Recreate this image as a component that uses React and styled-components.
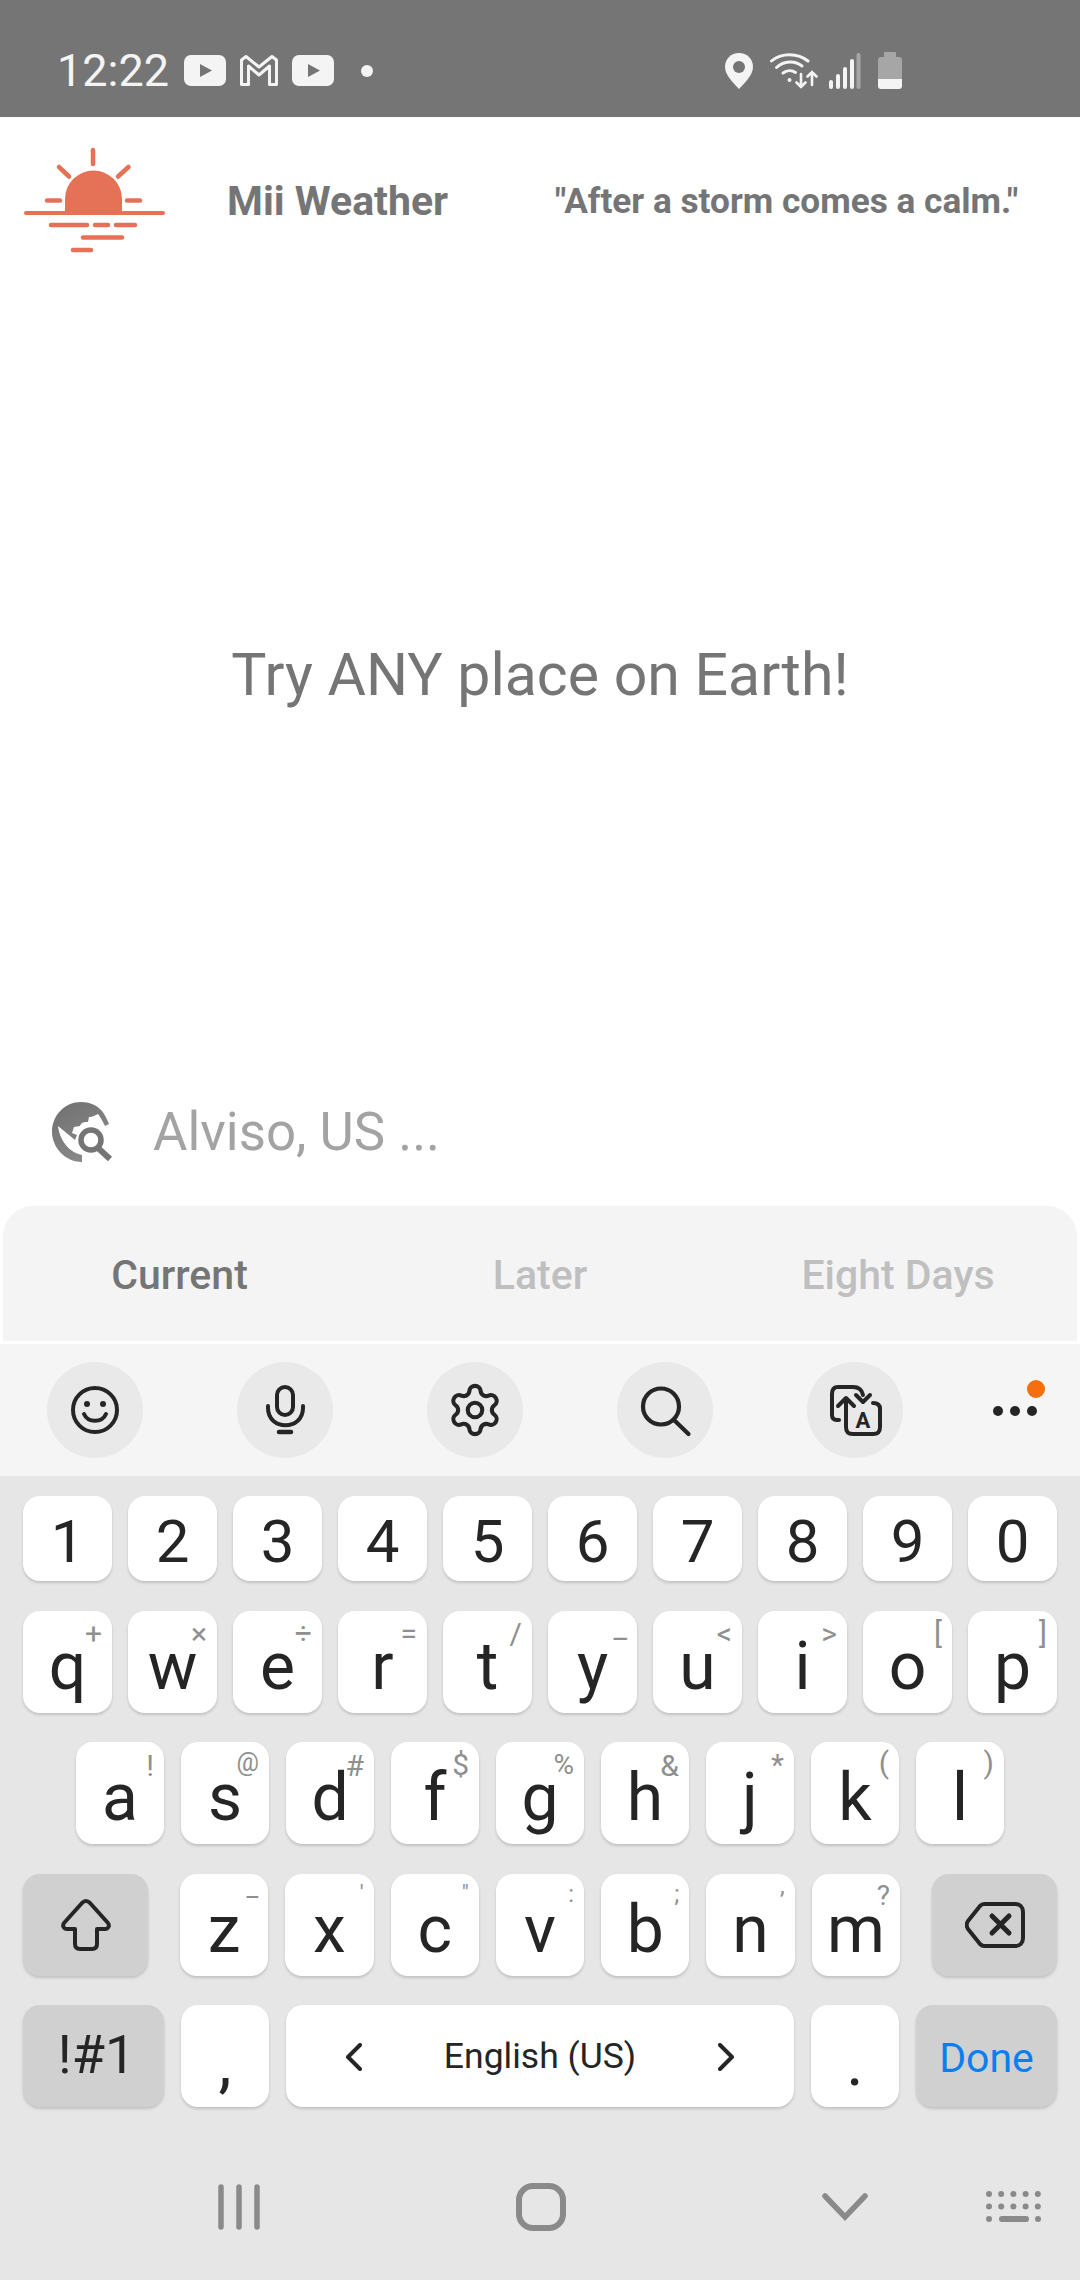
import React from "react";
import styled, { createGlobalStyle } from "styled-components";
import { Settings } from "lucide-react";

const Global = createGlobalStyle`
  html, body { margin: 0; padding: 0; background: #fff; }
  * { box-sizing: border-box; }
`;

const Page = styled.div`
  width: 1080px;
  height: 2280px;
  display: flex;
  flex-direction: column;
  overflow: hidden;
  background: #fff;
  font-family: Roboto, "Liberation Sans", sans-serif;
`;

const StatusBar = styled.div`
  height: 117px;
  flex: none;
  background: #757575;
  display: flex;
  align-items: center;
  padding: 24px 0 0 57px;
  color: #f4f4f4;
`;
const Time = styled.span`
  font-size: 45px;
  font-weight: 400;
  line-height: 1;
  width: 127px;
`;
const StatusIcon = styled.svg`
  flex: none;
  margin-left: ${(p) => p.$ml || 0}px;
`;

const Header = styled.div`
  height: 140px;
  flex: none;
  display: flex;
  align-items: flex-start;
  padding: 30px 0 0 22px;
  color: #757575;
  font-weight: 700;
`;
const Logo = styled.svg`
  flex: none;
`;
const HeaderText = styled.div`
  flex: 1;
  display: flex;
  align-items: center;
  height: 108px;
`;
const AppName = styled.div`
  font-size: 41px;
  margin-left: 59px;
  width: 328px;
  white-space: nowrap;
`;
const Quote = styled.div`
  font-size: 35.2px;
  white-space: nowrap;
`;

const Main = styled.div`
  flex: 1;
  display: flex;
  align-items: center;
  justify-content: center;
  padding-top: 6px;
  font-size: 59px;
  color: #757575;
`;

const SearchRow = styled.div`
  height: 120px;
  flex: none;
  display: flex;
  align-items: flex-start;
  padding: 16px 0 0 52px;
`;
const Placeholder = styled.div`
  margin-left: 39px;
  font-size: 52.8px;
  font-weight: 400;
  line-height: 60px;
  color: #a3a3a3;
`;

const Tabs = styled.div`
  height: 135px;
  flex: none;
  margin: 0 3px;
  background: #f4f4f4;
  border-radius: 30px 30px 0 0;
  display: grid;
  grid-template-columns: repeat(3, 1fr);
  align-items: start;
  padding-top: 46px;
`;
const Tab = styled.div`
  text-align: center;
  font-size: 41px;
  line-height: 46px;
  font-weight: 500;
  padding-right: ${(p) => (p.$active ? "5px" : "0")};
  color: ${(p) => (p.$active ? "#757575" : "#bfbfbf")};
`;

const Toolbar = styled.div`
  margin-top: 3px;
  height: 132px;
  flex: none;
  background: #f5f5f5;
  display: flex;
  align-items: center;
  gap: 94px;
  padding-left: 47px;
`;
const ToolButton = styled.div`
  width: 96px;
  height: 96px;
  flex: none;
  border-radius: 50%;
  background: #e9e9e9;
  display: flex;
  align-items: center;
  justify-content: center;
  color: #252525;
`;
const MoreButton = styled.div`
  position: relative;
  width: 44px;
  flex: none;
  display: flex;
  justify-content: space-between;
  margin-left: -4px;
  margin-top: 2px;
`;
const Dot = styled.span`
  width: 10px;
  height: 10px;
  border-radius: 50%;
  background: #252525;
`;
const Badge = styled.span`
  position: absolute;
  right: -8px;
  top: -26px;
  width: 18px;
  height: 18px;
  border-radius: 50%;
  background: #f56f0f;
`;

const Keyboard = styled.div`
  flex: none;
  height: 804px;
  background: #e6e6e6;
  padding: 20px 23px 0;
  display: flex;
  flex-direction: column;
  gap: 29.5px;
`;
const Row = styled.div`
  display: flex;
  gap: ${(p) => p.$gap ?? 16}px;
  padding: 0 ${(p) => p.$inset || 0}px;
`;
const Group = styled.div`
  display: flex;
  gap: 17px;
  margin: 0 32px;
  flex: 1;
`;
const Key = styled.div`
  position: relative;
  flex: ${(p) => (p.$w ? `0 0 ${p.$w}px` : "1 1 0")};
  height: ${(p) => p.$h || 102}px;
  border-radius: 17px;
  background: ${(p) => (p.$fn ? "#d0d0d0" : "#ffffff")};
  box-shadow: 0 2px 3px rgba(0, 0, 0, 0.16);
  color: #252525;
  display: flex;
  justify-content: center;
  align-items: flex-end;
  padding-bottom: ${(p) => p.$pb ?? 13}px;
  padding-left: ${(p) => p.$pl || 0}px;
  font-size: ${(p) => p.$fs || 66}px;
  line-height: 1;
`;
const Hint = styled.span`
  position: absolute;
  right: 10px;
  top: ${(p) => p.$top ?? 7}px;
  font-size: ${(p) => p.$fs || 30}px;
  line-height: 1;
  color: #8f8f8f;
`;
const SpaceKey = styled(Key)`
  justify-content: space-between;
  align-items: center;
  padding: 2px 60px 0;
  font-size: 35.5px;
`;
const FnText = styled.span`
  color: ${(p) => p.$color || "#252525"};
`;

const NavBar = styled.div`
  display: flex;
  align-items: center;
  padding-left: 195px;
  margin-top: 46.5px;
  color: #8a8a8a;
`;
const NavIcon = styled.svg`
  flex: none;
  margin-left: ${(p) => p.$ml || 0}px;
`;

const digits = "1234567890".split("");
const row2 = [
  ["q", "+", 8], ["w", "×", 8], ["e", "÷", 8], ["r", "=", 8], ["t", "/", 8],
  ["y", "_", 2], ["u", "<", 8], ["i", ">", 8], ["o", "[", 7], ["p", "]", 7],
];
const row3 = [
  ["a", "!", 9], ["s", "@", 8, 25], ["d", "#", 9], ["f", "$", 8], ["g", "%", 9, 28],
  ["h", "&", 9], ["j", "*", 8], ["k", "(", 6], ["l", ")", 6],
];
const row4 = [
  ["z", "_", 0, 26], ["x", "'", 8, 22], ["c", '"', 8, 22], ["v", ":", 8, 24],
  ["b", ";", 8, 24], ["n", ",", 0, 24], ["m", "?", 8, 28],
];

const Youtube = ({ ml }) => (
  <StatusIcon $ml={ml} width="42" height="31" viewBox="0 0 42 31">
    <rect x="0" y="0" width="42" height="31" rx="7" fill="#f4f4f4" />
    <path d="M16 9 L28 15.5 L16 22 Z" fill="#757575" />
  </StatusIcon>
);

const StatusBarIcons = () => (
  <>
    <Youtube />
    <StatusIcon $ml={14} width="38" height="31" viewBox="0 0 38 31" fill="none">
      <path
        d="M1.5 29.5 V5 L6 1.5 L19 12 L32 1.5 L36.5 5 V29.5 H29.5 V11 L19 20 L8.500 11 V29.5 Z"
        stroke="#f4f4f4"
        strokeWidth="3"
        strokeLinejoin="round"
      />
    </StatusIcon>
    <Youtube ml={14} />
    <StatusIcon $ml={27} width="12" height="12" viewBox="0 0 12 12">
      <circle cx="6" cy="6" r="6" fill="#f4f4f4" />
    </StatusIcon>
    <StatusIcon $ml={352} width="28" height="36" viewBox="0 0 28 36">
      <path
        d="M14 0 C6 0 0 6 0 14 C0 21 7 29 14 36 C21 29 28 21 28 14 C28 6 22 0 14 0 Z"
        fill="#f4f4f4"
      />
      <circle cx="14" cy="14" r="6" fill="#757575" />
    </StatusIcon>
    <StatusIcon $ml={17} width="48" height="38" viewBox="0 0 48 38" fill="none" stroke="#f4f4f4" strokeWidth="3" strokeLinecap="round">
      <path d="M1.500 9 C11 0.500 28 0.500 38 9" />
      <path d="M6.500 15.500 C14 8.500 25 8.500 32 14" />
      <path d="M13 21 C17 18 22 18 25.500 20.500" />
      <circle cx="19.500" cy="28" r="2" fill="#f4f4f4" stroke="none" />
      <path d="M31 22 V35 M26.500 30.500 L31 35 L35.500 30.500" strokeWidth="2.600" />
      <path d="M42 33 V20 M37.500 24.500 L42 20 L46.500 24.500" strokeWidth="2.600" />
    </StatusIcon>
    <StatusIcon $ml={11} width="32" height="36" viewBox="0 0 32 36" strokeLinecap="round" strokeWidth="4">
      <path d="M2 34 V29 M9 34 V23 M16 34 V16 M23 34 V8" stroke="#f4f4f4" />
      <path d="M29.500 34 V2" stroke="#a6a6a6" />
    </StatusIcon>
    <StatusIcon $ml={17} width="24" height="37" viewBox="0 0 24 37">
      <path d="M7 0 H17 Q18 0 18 1 V5 H21 Q24 5 24 8 V27 H0 V8 Q0 5 3 5 H6 V1 Q6 0 7 0 Z" fill="#a6a6a6" />
      <path d="M0 27 H24 V34 Q24 37 21 37 H3 Q0 37 0 34 Z" fill="#f4f4f4" />
    </StatusIcon>
  </>
);

const SunLogo = () => (
  <Logo width="146" height="108" viewBox="22 146 146 108" fill="none" stroke="#e57157" strokeWidth="4.500" strokeLinecap="round">
    <path d="M65 211 V198 A28.500 28.500 0 0 1 122 198 V211 Z" fill="#e57157" stroke="none" />
    <path d="M93 149 V163" />
    <path d="M59 166 L69 175.500" />
    <path d="M128.500 166 L118 175.500" />
    <path d="M47 199.500 H60" />
    <path d="M127 199.500 H140" />
    <path d="M26 212 H163" strokeWidth="4" />
    <path d="M51 224 H87 M95 224 H108 M116 224 H135" />
    <path d="M83 236.500 H122" />
    <path d="M73 249 H91" />
  </Logo>
);

const EarthSearch = () => (
  <svg width="62" height="60" viewBox="0 0 62 60" fill="none">
    <defs>
      <linearGradient id="globe" x1="0" y1="0" x2="0.6" y2="1">
        <stop offset="0" stopColor="#6f6f6f" />
        <stop offset="1" stopColor="#8a8a8a" />
      </linearGradient>
    </defs>
    <path
      d="M29 0 C37 0 45 3 50 9 C53 13 55 17 57 22 L53 24 C51 20 49 16 46 12 C43 13 41 15 37 15 L36 20 C33 20 29 20 28 24 L22 25 L20 31 L25 33 L23 38 L6 24 C7 35 15 50 30 53 V60 C12 60 0 44 0 30 C0 13 13 0 29 0 Z"
      fill="url(#globe)"
    />
    <circle cx="39" cy="38" r="10" stroke="#757575" strokeWidth="5.500" />
    <path d="M46 46 L58 57" stroke="#757575" strokeWidth="6" />
  </svg>
);

const Smile = () => (
  <svg width="96" height="96" viewBox="0 0 96 96" fill="none" stroke="currentColor" strokeWidth="4" strokeLinecap="round">
    <circle cx="48" cy="48" r="22" />
    <circle cx="40" cy="42" r="3" fill="currentColor" stroke="none" />
    <circle cx="56" cy="42" r="3" fill="currentColor" stroke="none" />
    <path d="M37 52 C41 61 55 61 59 52" />
  </svg>
);
const Mic = () => (
  <svg width="96" height="96" viewBox="0 0 96 96" fill="none" stroke="currentColor" strokeWidth="4" strokeLinecap="round">
    <rect x="40" y="25" width="16" height="28" rx="8" />
    <path d="M31 44 V46 C31 69 66 69 66 46 V44" />
    <path d="M42 70 H54" strokeWidth="4.500" />
  </svg>
);
const Search = () => (
  <svg width="96" height="96" viewBox="0 0 96 96" fill="none" stroke="currentColor" strokeWidth="4.200" strokeLinecap="round">
    <circle cx="44" cy="44.500" r="18" />
    <path d="M57 58 L71.500 72" />
  </svg>
);
const Translate = () => (
  <svg width="96" height="96" viewBox="0 0 96 96" fill="none" stroke="currentColor" strokeWidth="4" strokeLinecap="round" strokeLinejoin="round">
    <path d="M32 58 H30 C26 58 25 56 25 53 V32 C25 27 27 25 31 25 H46 C52 25 55 28 56 33" />
    <path d="M49 33 L56 40 L63 33" />
    <path d="M39 62 V36 M31 44 L39 36 L47 44" />
    <path d="M66 41 C71 41 73 43 73 47 V65 C73 70 71 72 66 72 H46 C41 72 39 70 39 65 V62" />
    <text x="56" y="66" textAnchor="middle" fontFamily="Roboto, sans-serif" fontWeight="700" fontSize="22" fill="currentColor" stroke="none">A</text>
  </svg>
);

const ShiftIcon = () => (
  <svg width="52" height="54" viewBox="0 0 52 54" fill="none" stroke="#252525" strokeWidth="4" strokeLinejoin="round">
    <path d="M26 3 C28 3 29 4 30 5 L48 25 C50 28 48 31 45 31 H37 V46 C37 50 35 51 32 51 H20 C17 51 15 50 15 46 V31 H7 C4 31 2 28 4 25 L22 5 C23 4 24 3 26 3 Z" />
  </svg>
);
const BackspaceIcon = () => (
  <svg width="60" height="46" viewBox="0 0 60 46" fill="none" stroke="#252525" strokeWidth="4" strokeLinecap="round" strokeLinejoin="round">
    <path d="M19 2 H50 C55 2 58 5 58 10 V36 C58 41 55 44 50 44 H19 C17 44 16 43 15 42 L3 27 C1 24 1 22 3 19 L15 4 C16 3 17 2 19 2 Z" />
    <path d="M27 14 L44 31 M44 14 L27 31" strokeWidth="5" />
  </svg>
);
const Chevron = ({ flip }) => (
  <svg width="16" height="28" viewBox="0 0 16 28" fill="none" stroke="#252525" strokeWidth="4" strokeLinecap="round" strokeLinejoin="round">
    <path d={flip ? "M2 2 L14 14 L2 26" : "M14 2 L2 14 L14 26"} />
  </svg>
);

const NavIcons = () => (
  <>
    <NavIcon width="42" height="46" viewBox="0 0 42 46" stroke="currentColor" strokeWidth="5.500" strokeLinecap="round">
      <path d="M3 3 V43 M21 3 V43 M39 3 V43" />
    </NavIcon>
    <NavIcon $ml={256} width="50" height="48" viewBox="0 0 50 48" fill="none" stroke="currentColor" strokeWidth="6">
      <rect x="3" y="3" width="44" height="42" rx="14" />
    </NavIcon>
    <NavIcon $ml={256} width="46" height="28" viewBox="0 0 46 28" fill="none" stroke="currentColor" strokeWidth="5.500" strokeLinecap="round">
      <path d="M3 3 L23 24 L43 3" />
    </NavIcon>
    <NavIcon $ml={118} width="56" height="32" viewBox="0 0 56 32" fill="currentColor">
      {[0, 1].map((r) =>
        [0, 1, 2, 3, 4].map((c) => <circle key={`${r}${c}`} cx={3 + c * 12.2} cy={3 + r * 12.500} r="3" />)
      )}
      <circle cx="3" cy="28" r="3" />
      <circle cx="52" cy="28" r="3" />
      <rect x="13" y="25" width="30" height="6" rx="3" />
    </NavIcon>
  </>
);

export default function App() {
  return (
    <Page>
      <Global />
      <StatusBar>
        <Time>12:22</Time>
        <StatusBarIcons />
      </StatusBar>

      <Header>
        <SunLogo />
        <HeaderText>
          <AppName>Mii Weather</AppName>
          <Quote>"After a storm comes a calm."</Quote>
        </HeaderText>
      </Header>

      <Main>Try ANY place on Earth!</Main>

      <SearchRow>
        <EarthSearch />
        <Placeholder>Alviso, US ...</Placeholder>
      </SearchRow>

      <Tabs>
        <Tab $active>Current</Tab>
        <Tab>Later</Tab>
        <Tab>Eight Days</Tab>
      </Tabs>

      <Toolbar>
        <ToolButton><Smile /></ToolButton>
        <ToolButton><Mic /></ToolButton>
        <ToolButton><Settings size={58} strokeWidth={1.7} /></ToolButton>
        <ToolButton><Search /></ToolButton>
        <ToolButton><Translate /></ToolButton>
        <MoreButton>
          <Dot /><Dot /><Dot />
          <Badge />
        </MoreButton>
      </Toolbar>

      <Keyboard>
        <Row>
          {digits.map((d) => (
            <Key key={d} $h={85} $fs={60} $pb={9}>{d}</Key>
          ))}
        </Row>
        <Row>
          {row2.map(([k, h, top]) => (
            <Key key={k}>{k}<Hint $top={top}>{h}</Hint></Key>
          ))}
        </Row>
        <Row $inset={53} $gap={17}>
          {row3.map(([k, h, top, fs]) => (
            <Key key={k}>{k}<Hint $top={top} $fs={fs}>{h}</Hint></Key>
          ))}
        </Row>
        <Row $gap={0}>
          <Key $fn $w={125} $pb={24}><ShiftIcon /></Key>
          <Group>
            {row4.map(([k, h, top, fs]) => (
              <Key key={k}>{k}<Hint $top={top} $fs={fs}>{h}</Hint></Key>
            ))}
          </Group>
          <Key $fn $w={125} $pb={28}><BackspaceIcon /></Key>
        </Row>
        <Row $gap={17}>
          <Key $fn $w={141} $fs={54} $pb={25} $pl={6}>!#1</Key>
          <Key $w={88} $pb={11}>,</Key>
          <SpaceKey $w={508}>
            <Chevron />
            <span>English (US)</span>
            <Chevron flip />
          </SpaceKey>
          <Key $w={88} $pb={11}>.</Key>
          <Key $fn $w={141} $fs={41} $pb={28}><FnText $color="#0a7ff0">Done</FnText></Key>
        </Row>
        <NavBar><NavIcons /></NavBar>
      </Keyboard>
    </Page>
  );
}
